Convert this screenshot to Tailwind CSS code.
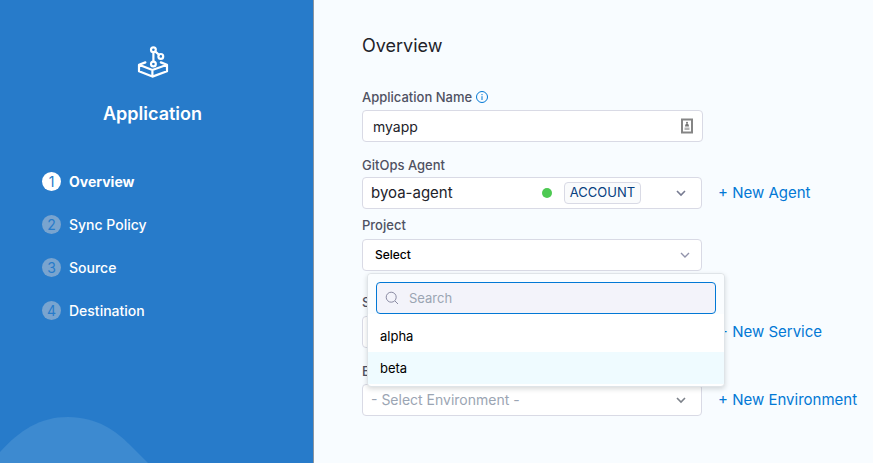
<!DOCTYPE html>
<html lang="en">
<head>
<meta charset="utf-8">
<meta name="viewport" content="width=device-width, initial-scale=1">
<title>Application - Overview</title>
<script src="https://cdn.jsdelivr.net/npm/@tailwindcss/browser@4"></script>
</head>
<body class="flex min-h-screen bg-[#f8fcff] font-['Inter',sans-serif] text-[#22222a]">
  <aside class="relative w-[314px] shrink-0 overflow-hidden border-r border-[#8c959f] bg-[#277bca] text-white">
    <div class="flex flex-col items-center pt-[46px] pr-2">
      <svg class="h-8 w-8" viewBox="0 0 32 32" fill="none" stroke="currentColor" stroke-width="2.2" stroke-linejoin="round" stroke-linecap="round" aria-hidden="true">
        <circle cx="16.4" cy="3.8" r="2.4"/>
        <circle cx="23.8" cy="10.4" r="2.4"/>
        <circle cx="16.4" cy="18" r="2.4"/>
        <path d="M16.4 6.4v9M18.4 5.6l3.6 3.2"/>
        <path d="M8.4 16.4 2 18.8V25.2L15.4 30.6 30 25.2v-6.4L23.8 16.4M2 18.8l13.4 5.2L30 18.8M15.4 24V30.6"/>
      </svg>
      <h1 class="mt-6 text-lg leading-6 font-semibold">Application</h1>
    </div>
    <nav class="mt-[46px] pl-[42px]" aria-label="Steps">
      <ol class="flex flex-col gap-6">
        <li><a href="#overview" class="flex h-[19px] items-center gap-2 text-sm font-bold"><span class="flex size-[19px] items-center justify-center rounded-full bg-white text-sm font-normal text-[#277bca]">1</span>Overview</a></li>
        <li><a href="#sync" class="flex h-[19px] items-center gap-2 text-sm font-medium"><span class="flex size-[19px] items-center justify-center rounded-full bg-[#79a4cf] text-sm font-normal text-[#277bca]">2</span>Sync Policy</a></li>
        <li><a href="#source" class="flex h-[19px] items-center gap-2 text-sm font-medium"><span class="flex size-[19px] items-center justify-center rounded-full bg-[#79a4cf] text-sm font-normal text-[#277bca]">3</span>Source</a></li>
        <li><a href="#destination" class="flex h-[19px] items-center gap-2 text-sm font-medium"><span class="flex size-[19px] items-center justify-center rounded-full bg-[#79a4cf] text-sm font-normal text-[#277bca]">4</span>Destination</a></li>
      </ol>
    </nav>
    <svg class="absolute bottom-0 left-0 h-[46px] w-[148px]" viewBox="0 0 148 46" aria-hidden="true"><path d="M0 35C20 13 40 0 68 0c29 0 48 14 62 28l18 18H0z" fill="#3d8ad0"/></svg>
  </aside>

  <main class="min-w-0 flex-1 pt-[34px] pl-12" id="overview">
    <h2 class="text-lg leading-6">Overview</h2>
    <form class="mt-[31px] text-[15px]">
      <div>
        <div class="flex h-4 items-center gap-1">
          <label for="name" class="text-[13px] leading-4 font-medium text-[#4f5162]">Application Name</label>
          <svg class="size-3" viewBox="0 0 12 12" fill="none" stroke="#0278d5" aria-label="Info" role="img"><circle cx="6" cy="6" r="5.5"/><path d="M6 5.2V9M6 3v1.2"/></svg>
        </div>
        <div class="relative mt-[5px] w-[341px]">
          <input id="name" type="text" value="myapp" class="h-8 w-full rounded border border-[#d9dae5] bg-white px-2.5 text-sm outline-none">
          <svg class="absolute top-2 right-2.5 h-4 w-3" viewBox="0 0 12 16" aria-hidden="true"><path d="M1 1.5h10v13H1z" fill="#fff" stroke="#858585" stroke-width="2"/><circle cx="6" cy="4.8" r="1" fill="#777"/><path d="M4 8.6c0-4 4-4 4 0z" fill="#777"/><path d="M3.5 9.5h5V12h-5z" fill="#b5b5b5"/></svg>
        </div>
      </div>

      <div class="mt-[15px]">
        <label for="agent" class="block text-[13px] leading-4 font-medium text-[#4f5162]">GitOps Agent</label>
        <div class="mt-1 flex items-center gap-4">
          <div class="relative w-[340px]">
            <select id="agent" class="h-8 w-full appearance-none rounded border border-[#d9dae5] bg-white px-2 text-[15px] outline-none"><option>byoa-agent</option></select>
            <span class="pointer-events-none absolute inset-y-0 right-[61px] flex items-center gap-3"><span class="size-2.5 rounded-full bg-[#4dc952]"></span><span class="flex h-[22px] w-[77px] items-center justify-center rounded border border-[#d9dae5] bg-[#fafbfc] text-[13px] text-[#07407f]">ACCOUNT</span></span>
            <svg class="pointer-events-none absolute top-3 right-4 h-2 w-2.5" viewBox="0 0 10 8" fill="none" stroke="#777b91" stroke-width="1.6" aria-hidden="true"><path d="m1 2 4 4 4-4"/></svg>
          </div>
          <a href="#new-agent" class="whitespace-nowrap text-[#0278d5]">+ New Agent</a>
        </div>
      </div>

      <div class="mt-2">
        <label for="project" class="block text-[13px] leading-4 font-medium text-[#4f5162]">Project</label>
        <div class="relative mt-1.5 w-[340px]">
          <button id="project" type="button" aria-haspopup="listbox" aria-expanded="true" class="flex h-8 w-full items-center justify-between rounded border border-[#d9dae5] bg-white pr-[11px] pl-3 text-xs font-medium text-black">Select
            <svg class="h-2 w-2.5" viewBox="0 0 10 8" fill="none" stroke="#9293ab" stroke-width="1.4" aria-hidden="true"><path d="m1 2 4 4 4-4"/></svg>
          </button>
          <div class="absolute top-[34px] left-[5px] z-10 w-[358px] rounded border border-[#dfe4e8] bg-white pb-0.5 shadow-[0_2px_5px_rgba(16,22,26,0.16)]">
            <div class="rounded-t bg-[#fafdff] px-2 pt-2">
              <div class="relative">
                <svg class="absolute top-[9px] left-[9px] size-[14px]" viewBox="0 0 14 14" fill="none" stroke="#8a8ba3" aria-hidden="true"><circle cx="6.2" cy="6.2" r="5"/><path d="m10 10 3 3"/></svg>
                <input type="search" placeholder="Search" aria-label="Search" class="block h-8 w-full rounded border border-[#0278d5] bg-[#f3f3fa] pr-3 pl-8 text-[13px] outline-none placeholder:text-[#9ba5b3]">
              </div>
            </div>
            <ul role="listbox" aria-label="Project" class="pt-1.5 text-[13px] text-black">
              <li role="option" class="flex h-8 items-center px-3 pt-px">alpha</li>
              <li role="option" aria-selected="true" class="flex h-8 items-center bg-[#effbff] px-3 pt-px">beta</li>
            </ul>
          </div>
        </div>
      </div>

      <div class="mt-[23px]">
        <label for="service" class="block text-[13px] leading-4 font-medium text-[#4f5162]">Service</label>
        <div class="mt-1.5 flex items-center gap-4">
          <select id="service" class="h-8 w-[340px] appearance-none rounded border border-[#d9dae5] bg-white px-2 text-sm text-[#9ba5b3]"><option>- Select Service -</option></select>
          <a href="#new-service" class="whitespace-nowrap text-[#0278d5]">+ New Service</a>
        </div>
      </div>

      <div class="mt-[15px]">
        <label for="env" class="block text-[13px] leading-4 font-medium text-[#4f5162]">Environment</label>
        <div class="mt-[5px] flex items-center gap-4">
          <div class="relative w-[340px]">
            <select id="env" class="h-8 w-full appearance-none rounded border border-[#d9dae5] bg-white px-2 text-sm text-[#9ba5b3] outline-none"><option>- Select Environment -</option></select>
            <svg class="pointer-events-none absolute top-3 right-4 h-2 w-2.5" viewBox="0 0 10 8" fill="none" stroke="#7d828a" stroke-width="1.6" aria-hidden="true"><path d="m1 2 4 4 4-4"/></svg>
          </div>
          <a href="#new-environment" class="whitespace-nowrap text-[#0278d5]">+ New Environment</a>
        </div>
      </div>
    </form>
  </main>
</body>
</html>
